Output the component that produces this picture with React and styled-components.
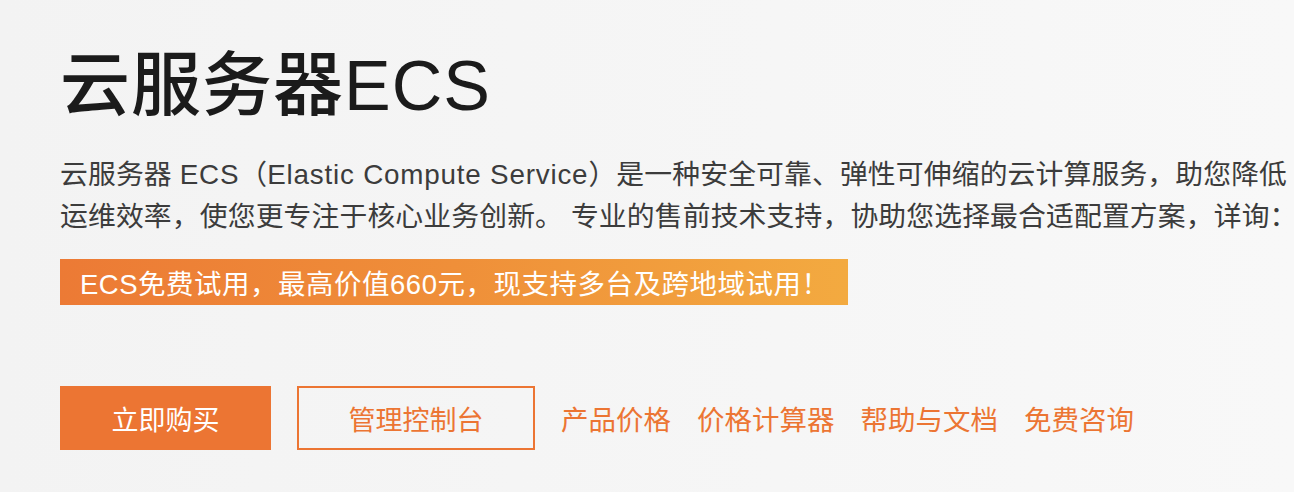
import React from 'react';
import styled, { createGlobalStyle } from 'styled-components';

const GlobalStyle = createGlobalStyle`
  html, body {
    margin: 0;
    padding: 0;
    background: #f4f4f4;
  }
  body {
    font-family: "Liberation Sans", "Noto Sans CJK SC", sans-serif;
  }
`;

const Page = styled.div`
  min-height: 492px;
  box-sizing: border-box;
  padding: 44px 0 0 60px;
  background: linear-gradient(90deg, #f3f3f3 0%, #f6f6f6 60%, #f8f8f8 100%);
`;

const Title = styled.h1`
  margin: 0;
  font-size: 70px;
  line-height: 84px;
  font-weight: 500;
  letter-spacing: 1px;
  color: #1b1b1b;
`;

const Desc = styled.p`
  margin: 26px 0 0;
  font-size: 27.8px;
  line-height: 42px;
  color: #3c3c3c;
  letter-spacing: 0.15px;
  white-space: nowrap;
`;

const Latin = styled.span`
  letter-spacing: 0.8px;
`;

const Banner = styled.div`
  display: inline-flex;
  align-items: center;
  margin-top: 21px;
  width: 788px;
  height: 46px;
  box-sizing: border-box;
  padding-left: 20px;
  background: linear-gradient(90deg, #ec7a35 0%, #ef8f39 50%, #f3aa40 100%);
  color: #fff;
  font-size: 27.5px;
  letter-spacing: 0.5px;
  white-space: nowrap;
`;

const Actions = styled.div`
  display: flex;
  align-items: center;
  gap: 26px;
  margin-top: 81px;
`;

const Button = styled.a`
  display: flex;
  align-items: center;
  justify-content: center;
  box-sizing: border-box;
  width: ${(p) => p.$width}px;
  height: 64px;
  font-size: 27px;
  text-decoration: none;
  background: ${(p) => (p.$primary ? '#ec7533' : 'transparent')};
  color: ${(p) => (p.$primary ? '#fff' : '#ec7533')};
  border: ${(p) => (p.$primary ? 'none' : '2px solid #ec7533')};
`;

const LinkItem = styled.a`
  font-size: 27.5px;
  color: #ec7533;
  text-decoration: none;
  white-space: nowrap;
`;

const links = ['产品价格', '价格计算器', '帮助与文档', '免费咨询'];

export default function App() {
  return (
    <>
      <GlobalStyle />
      <Page>
        <Title>云服务器ECS</Title>
        <Desc>
          云服务器 <Latin>ECS</Latin>（<Latin>Elastic Compute Service</Latin>）是一种安全可靠、弹性可伸缩的云计算服务，助您降低
          <br />
          运维效率，使您更专注于核心业务创新。 专业的售前技术支持，协助您选择最合适配置方案，详询：
        </Desc>
        <Banner>ECS免费试用，最高价值660元，现支持多台及跨地域试用！</Banner>
        <Actions>
          <Button $primary $width={211} href="#">立即购买</Button>
          <Button $width={238} href="#">管理控制台</Button>
          {links.map((l) => (
            <LinkItem key={l} href="#">{l}</LinkItem>
          ))}
        </Actions>
      </Page>
    </>
  );
}
